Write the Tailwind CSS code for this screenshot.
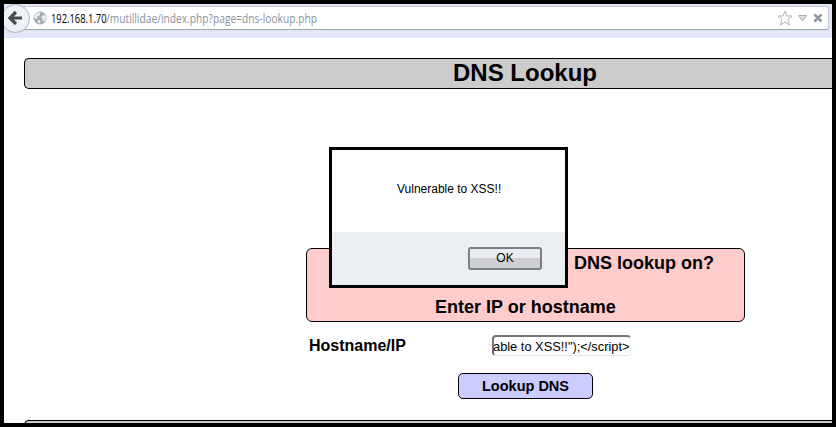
<!DOCTYPE html>
<html lang="en">
<head>
<meta charset="utf-8">
<title>DNS Lookup</title>
<script src="https://cdn.jsdelivr.net/npm/@tailwindcss/browser@4"></script>
</head>
<body class="w-[836px] h-[427px] overflow-hidden bg-black font-['Liberation_Sans',Arial,sans-serif] text-black">
<div class="relative w-[836px] h-[427px] pt-1 pb-1 pl-1 pr-1 overflow-hidden">
  <div class="h-[419px] bg-white overflow-hidden flex flex-col">
    <!-- browser toolbar -->
    <header class="relative h-[34px] shrink-0 bg-[#e3e6f6] pt-[2px] pr-[3px]">
      <div class="h-6 ml-5 border border-[#c3c8cb] border-b-[#9ba5a6] rounded-r-[3px] bg-white flex items-center pl-[8px] pr-[5px]">
        <svg class="w-[14px] h-[14px] shrink-0" viewBox="0 0 14 14"><circle cx="7" cy="7" r="6.5" fill="#a3abb3"/><path d="M2 3.5 5 1.2 7.5 2 6.5 4.5 4 5.5 4.5 7.5 2.5 8 1 6z M8 6l3-2.5 2 2L12.5 9 10 10.5 9.5 8z M4.5 9 7.5 9.5 7 12 5.5 12.5z" fill="#e9eef2"/></svg>
        <div class="ml-[4px] mt-px w-[266px] h-5 leading-5 whitespace-nowrap font-['Open_Sans','Noto_Sans',sans-serif] text-[12px] text-[#8b9299]"><span class="inline-block w-[55px] origin-left scale-x-[.78] text-black">192.168.1.70</span><span class="inline-block origin-left scale-x-[.852]">/mutillidae/index.php?page=dns-lookup.php</span></div>
        <div class="ml-auto flex items-center">
          <svg class="w-4 h-4" viewBox="0 0 16 16"><path d="M8 1 10 6h5l-4 3.500 1.500 5.500L8 12l-4.500 3L5 9.500 1 6h5z" fill="#fff" stroke="#a9b0b8"/></svg>
          <svg class="w-[9px] h-4 ml-[5px]" viewBox="0 0 9 16"><path d="M.5 5.500h8L4.500 11z" fill="#dde1e5" stroke="#a9b0b8"/></svg>
          <svg class="w-[10px] h-4 ml-[6px]" viewBox="0 0 10 16"><path d="M1.500 4.500l7 7m0-7-7 7" fill="none" stroke="#8d98a3" stroke-width="2.600"/></svg>
        </div>
      </div>
      <svg class="absolute left-[-1px] top-0 w-[28px] h-[31px]" viewBox="0 0 28 31"><circle cx="12.500" cy="14.500" r="14" fill="#edf1f8" stroke="#a9b1b8"/><path d="M13 8 7 14l6 6M7.500 14H19" fill="none" stroke="#4a4a4d" stroke-width="3.200"/></svg>
    </header>
    <main class="flex-1 min-h-0">
      <h1 class="mt-5 ml-5 h-[31px] border border-r-0 border-black rounded-l-[5px] bg-[#ccc] pl-[428px] text-[24px] leading-[28px] font-bold whitespace-nowrap">DNS Lookup</h1>
      <section class="mt-[159px] ml-[302px] w-[439px] h-[74px] border border-black rounded-[6px] bg-[#fcc] font-bold text-[18px] leading-[28px] whitespace-nowrap">
        <p class="text-right pr-[30px]">DNS lookup on?</p>
        <p class="mt-4 pl-[128px]">Enter IP or hostname</p>
      </section>
      <div class="mt-[13px] ml-[305px] h-[22px] flex">
        <label class="w-[183px] text-[16px] leading-[21px] font-bold">Hostname/IP</label>
        <div class="w-[139px] h-[21px] border-t-2 border-l-2 border-t-[#737378] border-l-[#737378] border-r border-b border-r-[#eef2f3] border-b-[#e2e6e9] rounded-[4px] text-[13.300px] leading-[20px] whitespace-nowrap"><span class="inline-block -ml-px origin-left scale-x-[.965]">able to XSS!!");&lt;/script&gt;</span></div>
      </div>
      <div class="mt-4 ml-[454px] w-[135px] h-[26px] border border-black rounded-[5px] bg-[#ccf] text-center text-[14.500px] leading-[25px] font-bold">Lookup DNS</div>
      <div class="mt-[21px] ml-5 h-[31px] border border-r-0 border-black rounded-l-[5px] bg-[#ccc]"></div>
    </main>
  </div>
  <!-- alert dialog -->
  <div class="absolute left-[329px] top-[147px] w-[239px] h-[141px] border-[3px] border-black bg-white flex flex-col">
    <p class="h-[82px] pt-[31px] pl-[65px] text-[12px] leading-[16px] whitespace-nowrap">Vulnerable to XSS!!</p>
    <div class="flex-1 bg-[#eceff2] pt-[15px] pl-[136px]">
      <div class="w-[74px] h-[23px] border-2 border-[#7b8085] rounded-[3px] bg-linear-to-b from-[#e9edf1] from-45% to-[#cfcfd3] to-50% text-center text-[12px] leading-[18px]">OK</div>
    </div>
  </div>
</div>
</body>
</html>
